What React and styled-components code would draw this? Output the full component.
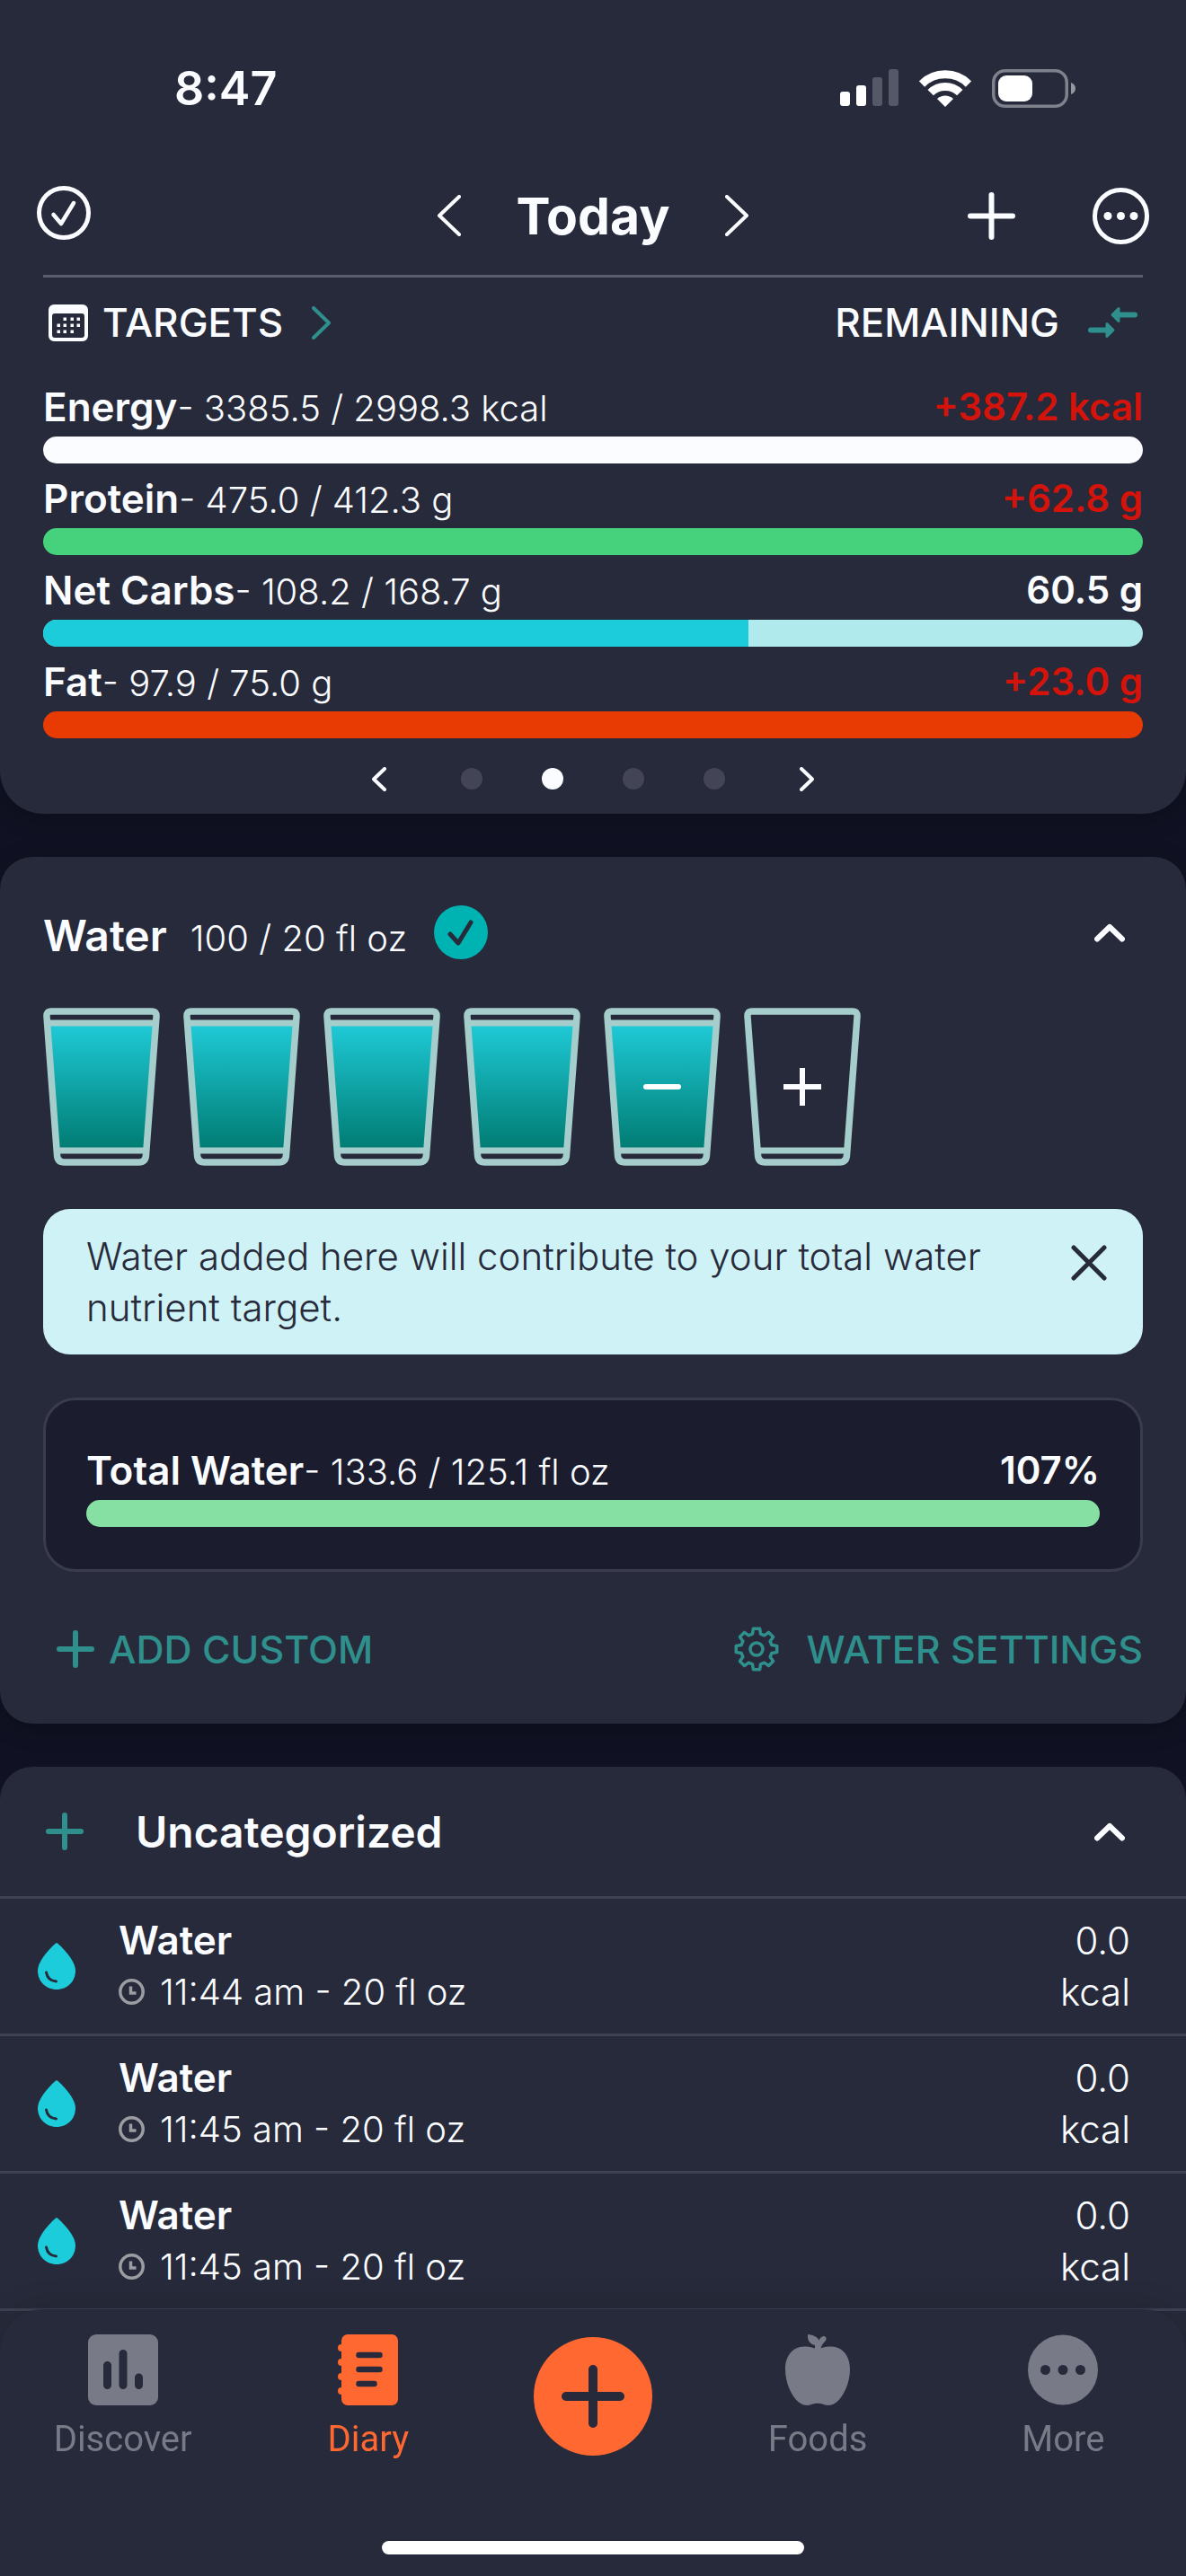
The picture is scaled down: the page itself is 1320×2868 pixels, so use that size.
import React, { useState } from 'react'
import styled, { createGlobalStyle } from 'styled-components'

const targets = [
  { name: 'Energy', amount: '3385.5 / 2998.3 kcal', remaining: '+387.2 kcal', over: true, percent: 100, color: '#fafcff' },
  { name: 'Protein', amount: '475.0 / 412.3 g', remaining: '+62.8 g', over: true, percent: 100, color: '#46d27c' },
  { name: 'Net Carbs', amount: '108.2 / 168.7 g', remaining: '60.5 g', over: false, percent: 64.1, color: '#1dccdb' },
  { name: 'Fat', amount: '97.9 / 75.0 g', remaining: '+23.0 g', over: true, percent: 100, color: '#e83b04' },
]

const entries = [
  { id: 1, name: 'Water', time: '11:44 am', amount: '20 fl oz', energy: '0.0' },
  { id: 2, name: 'Water', time: '11:45 am', amount: '20 fl oz', energy: '0.0' },
  { id: 3, name: 'Water', time: '11:45 am', amount: '20 fl oz', energy: '0.0' },
]

const glasses = ['full', 'full', 'full', 'full', 'minus', 'plus']

export default function App() {
  const [page, setPage] = useState(1)
  const [notice, setNotice] = useState(true)

  return (
    <React.Fragment>
      <GlobalStyle />

      <TopCard>
        <StatusBar>
          <Clock>8:47</Clock>
          <StatusIcons>
            <SignalIcon />
            <WifiIcon />
            <BatteryIcon />
          </StatusIcons>
        </StatusBar>

        <Header>
          <HeaderSide>
            <IconButton aria-label="Mark day complete">
              <CheckCircleIcon />
            </IconButton>
          </HeaderSide>
          <HeaderTitle>
            <IconButton aria-label="Previous day">
              <ChevronIcon width={26} height={46} direction="left" />
            </IconButton>
            <Title>Today</Title>
            <IconButton aria-label="Next day">
              <ChevronIcon width={26} height={46} direction="right" />
            </IconButton>
          </HeaderTitle>
          <HeaderSide end>
            <IconButton aria-label="Add">
              <PlusIcon size={53} />
            </IconButton>
            <IconButton aria-label="Options">
              <OptionsIcon />
            </IconButton>
          </HeaderSide>
        </Header>

        <Targets>
          <TargetsHead>
            <HeadButton>
              <CalendarIcon />
              TARGETS
              <Teal>
                <ChevronIcon width={21} height={37} direction="right" />
              </Teal>
            </HeadButton>
            <HeadButton>
              REMAINING
              <Teal>
                <SwapIcon />
              </Teal>
            </HeadButton>
          </TargetsHead>

          {targets.map(target => (
            <Target key={target.name}>
              <BarLine>
                <div>
                  <Strong>{target.name}</Strong>
                  <Light>- {target.amount}</Light>
                </div>
                <Value over={target.over}>{target.remaining}</Value>
              </BarLine>
              <Bar role="progressbar" aria-label={target.name} aria-valuenow={target.percent}>
                <BarFill color={target.color} style={{ width: `${target.percent}%` }} />
              </Bar>
            </Target>
          ))}

          <Pager>
            <IconButton aria-label="Previous targets" onClick={() => setPage(Math.max(page - 1, 0))}>
              <ChevronIcon width={16} height={27} direction="left" />
            </IconButton>
            <Dots>
              {[0, 1, 2, 3].map(dot => (
                <Dot key={dot} active={dot === page} aria-label={`Page ${dot + 1}`} onClick={() => setPage(dot)} />
              ))}
            </Dots>
            <IconButton aria-label="Next targets" onClick={() => setPage(Math.min(page + 1, 3))}>
              <ChevronIcon width={16} height={27} direction="right" />
            </IconButton>
          </Pager>
        </Targets>
      </TopCard>

      <WaterCard>
        <WaterHead>
          <WaterTitle>
            <SectionTitle>Water</SectionTitle>
            <Light>100 / 20 fl oz</Light>
          </WaterTitle>
          <DoneIcon />
          <Collapse aria-label="Collapse water">
            <CaretIcon />
          </Collapse>
        </WaterHead>

        <Glasses>
          {glasses.map((kind, index) => (
            <IconButton key={index} aria-label={kind === 'plus' ? 'Add glass' : 'Remove glass'}>
              <GlassIcon kind={kind} />
            </IconButton>
          ))}
        </Glasses>

        {notice && (
          <Notice>
            <NoticeText>Water added here will contribute to your total water nutrient target.</NoticeText>
            <NoticeClose aria-label="Dismiss" onClick={() => setNotice(false)}>
              <CloseIcon />
            </NoticeClose>
          </Notice>
        )}

        <Total>
          <BarLine>
            <div>
              <Strong>Total Water</Strong>
              <Light>- 133.6 / 125.1 fl oz</Light>
            </div>
            <Value>107%</Value>
          </BarLine>
          <Bar role="progressbar" aria-label="Total Water" aria-valuenow={100}>
            <BarFill color="#86e0a3" style={{ width: '100%' }} />
          </Bar>
        </Total>

        <Actions>
          <Action>
            <PlusIcon size={42} />
            ADD CUSTOM
          </Action>
          <Action wide>
            <GearIcon />
            WATER SETTINGS
          </Action>
        </Actions>
      </WaterCard>

      <MealCard>
        <MealHead>
          <MealAdd aria-label="Add to Uncategorized">
            <PlusIcon size={42} />
          </MealAdd>
          <SectionTitle>Uncategorized</SectionTitle>
          <Collapse aria-label="Collapse Uncategorized">
            <CaretIcon />
          </Collapse>
        </MealHead>

        <EntryList>
          {entries.map(entry => (
            <Entry key={entry.id}>
              <DropIcon />
              <EntryBody>
                <Strong>{entry.name}</Strong>
                <EntryInfo>
                  <ClockIcon />
                  {entry.time} - {entry.amount}
                </EntryInfo>
              </EntryBody>
              <EntryEnergy>
                <span>{entry.energy}</span>
                <span>kcal</span>
              </EntryEnergy>
            </Entry>
          ))}
        </EntryList>
      </MealCard>

      <TabBar>
        <Tabs>
          <Tab href="#discover">
            <DiscoverIcon />
            Discover
          </Tab>
          <Tab href="#diary" active>
            <DiaryIcon />
            Diary
          </Tab>
          <AddSlot>
            <AddButton aria-label="Add entry">
              <PlusIcon size={70} stroke={10} />
            </AddButton>
          </AddSlot>
          <Tab href="#foods">
            <AppleIcon />
            Foods
          </Tab>
          <Tab href="#more">
            <MoreIcon />
            More
          </Tab>
        </Tabs>
        <HomeIndicator />
      </TabBar>
    </React.Fragment>
  )
}

function SignalIcon() {
  return (
    <svg width="65" height="42" viewBox="0 0 65 42" fill="#fff">
      <rect x="0" y="25" width="11" height="16" rx="3" />
      <rect x="18" y="18" width="11" height="23" rx="3" />
      <rect x="36" y="9" width="11" height="32" rx="3" fill="#555866" />
      <rect x="54" y="0" width="11" height="41" rx="3" fill="#555866" />
    </svg>
  )
}

function WifiIcon() {
  return (
    <svg width="58" height="43" viewBox="0 0 58 43" fill="none" stroke="#fff" strokeWidth="9">
      <path d="M3 16.5a37 37 0 0 1 52 0" />
      <path d="M12.7 26.2a23 23 0 0 1 32.6 0" />
      <path d="M29 42l-9-9a13 13 0 0 1 18 0z" fill="#fff" stroke="none" />
    </svg>
  )
}

function BatteryIcon() {
  return (
    <svg width="94" height="43" viewBox="0 0 94 43">
      <rect x="1.75" y="1.75" width="81.5" height="39.5" rx="13" fill="none" stroke="#7f818d" strokeWidth="3.5" />
      <rect x="7" y="7" width="38" height="29" rx="9" fill="#fff" />
      <path d="M88 15c3 1 5 3.500 5 6.500s-2 5.500-5 6.500z" fill="#9496a0" />
    </svg>
  )
}

function CheckCircleIcon() {
  return (
    <svg width="60" height="66" viewBox="0 0 60 66" fill="none" stroke="currentColor" strokeLinecap="round" strokeLinejoin="round">
      <circle cx="30" cy="30" r="27.500" strokeWidth="5" />
      <path d="M18.500 32l8.500 10 14-23" strokeWidth="4.500" />
    </svg>
  )
}

function OptionsIcon() {
  return (
    <svg width="63" height="63" viewBox="0 0 63 63" fill="currentColor">
      <circle cx="31.500" cy="31.500" r="29" fill="none" stroke="currentColor" strokeWidth="5" />
      <circle cx="17" cy="31.500" r="4.500" />
      <circle cx="31.500" cy="31.500" r="4.500" />
      <circle cx="46" cy="31.500" r="4.500" />
    </svg>
  )
}

function ChevronIcon({ width, height, direction }) {
  const near = direction === 'left' ? width - 2 : 2
  const far = direction === 'left' ? 2 : width - 2

  return (
    <svg width={width} height={height} fill="none" stroke="currentColor" strokeWidth="4" strokeLinecap="round" strokeLinejoin="round">
      <path d={`M${near} 2L${far} ${height / 2}L${near} ${height - 2}`} />
    </svg>
  )
}

function PlusIcon({ size, stroke = 6 }) {
  const mid = size / 2
  const edge = stroke / 2

  return (
    <svg width={size} height={size} fill="none" stroke="currentColor" strokeWidth={stroke} strokeLinecap="round">
      <path d={`M${edge} ${mid}H${size - edge}M${mid} ${edge}V${size - edge}`} />
    </svg>
  )
}

function CalendarIcon() {
  const dots = [[18, 16], [26, 16], [33, 16], [11, 23], [18, 23], [26, 23], [33, 23], [11, 30], [18, 30], [26, 30]]

  return (
    <svg width="44" height="41" viewBox="0 0 44 41" fill="currentColor">
      <path fillRule="evenodd" d="M6 0h32a6 6 0 0 1 6 6v29a6 6 0 0 1-6 6H6a6 6 0 0 1-6-6V6a6 6 0 0 1 6-6zM7 10a3 3 0 0 0-3 3v21a3 3 0 0 0 3 3h30a3 3 0 0 0 3-3V13a3 3 0 0 0-3-3z" />
      {dots.map(([x, y]) => (
        <rect key={`${x}-${y}`} x={x - 1.5} y={y - 1.5} width="3.500" height="3.500" />
      ))}
    </svg>
  )
}

function SwapIcon() {
  return (
    <svg width="55" height="36" viewBox="0 0 55 36" stroke="currentColor" strokeLinecap="round" strokeLinejoin="round">
      <path d="M52 9.500H36M3 26.500h16" strokeWidth="6" fill="none" />
      <path d="M27 9.500l7-7v14zM28 26.500l-7-7v14z" strokeWidth="3" fill="currentColor" />
    </svg>
  )
}

function DoneIcon() {
  return (
    <svg width="60" height="60" viewBox="0 0 60 60">
      <circle cx="30" cy="30" r="30" fill="#00b3b3" />
      <path d="M18 32l9 10 14-23" fill="none" stroke="#272a3a" strokeWidth="5" strokeLinecap="round" strokeLinejoin="round" />
    </svg>
  )
}

function CaretIcon() {
  return (
    <svg width="34" height="21" viewBox="0 0 34 21" fill="none" stroke="currentColor" strokeWidth="6" strokeLinecap="round" strokeLinejoin="round">
      <path d="M3 17.500L17 4l14 13.500" />
    </svg>
  )
}

function GlassIcon({ kind }) {
  return (
    <svg width="130" height="176" viewBox="0 0 130 176" fill="none">
      <defs>
        <linearGradient id="water" x1="0" y1="0" x2="0" y2="1">
          <stop offset="0" stopColor="#1fcbd8" />
          <stop offset="1" stopColor="#007b72" />
        </linearGradient>
      </defs>
      {kind !== 'plus' && (
        <React.Fragment>
          <path d="M5 17h120L112 158H18z" fill="url(#water)" />
          <path d="M5 17h120" stroke="#a4cdcc" strokeWidth="7" />
        </React.Fragment>
      )}
      <path d="M16 159h98" stroke="#a4cdcc" strokeWidth="7" />
      <path
        d="M9 4h112q5.500 0 5 6L114.500 164q-.5 8-8 8h-83q-7.500 0-8-8L4 10Q3.500 4 9 4z"
        stroke="#a4cdcc"
        strokeWidth="7.500"
        strokeLinejoin="round"
      />
      {kind === 'minus' && <path d="M47 88h36" stroke="#fff" strokeWidth="6" strokeLinecap="round" />}
      {kind === 'plus' && <path d="M44 88h42M65 67v42" stroke="#fafcff" strokeWidth="6" />}
    </svg>
  )
}

function CloseIcon() {
  return (
    <svg width="40" height="40" viewBox="0 0 40 40" stroke="currentColor" strokeWidth="5" strokeLinecap="round">
      <path d="M3 3l34 34M37 3L3 37" />
    </svg>
  )
}

// Eight teeth around a ring, one corner pair per tooth
function GearIcon() {
  const points = []
  for (let tooth = 0; tooth < 8; tooth++) {
    const corners = [[-15, 17.5], [-9, 23], [9, 23], [15, 17.5]]
    corners.forEach(([offset, radius]) => {
      const angle = ((tooth * 45 + offset) * Math.PI) / 180
      points.push(`${(25 + radius * Math.sin(angle)).toFixed(2)},${(25 - radius * Math.cos(angle)).toFixed(2)}`)
    })
  }

  return (
    <svg width="50" height="50" viewBox="0 0 50 50" fill="none" stroke="currentColor" strokeWidth="3.500" strokeLinejoin="round">
      <polygon points={points.join(' ')} />
      <circle cx="25" cy="25" r="7" />
    </svg>
  )
}

function DropIcon() {
  return (
    <svg width="42" height="52" viewBox="0 0 42 52">
      <path d="M21 0c1 0 21 18 21 31 0 12-9 21-21 21S0 43 0 31C0 18 20 0 21 0z" fill="#1dccdb" />
      <path d="M9.500 33c1 6 5 9.500 11 10" fill="none" stroke="#272a3a" strokeWidth="3" strokeLinecap="round" />
    </svg>
  )
}

function ClockIcon() {
  return (
    <svg width="29" height="29" viewBox="0 0 29 29" fill="none" stroke="#9c9da3">
      <circle cx="14.500" cy="14.500" r="12.700" strokeWidth="3.500" />
      <path d="M13.500 8.500v7.500h6" strokeWidth="3.500" />
    </svg>
  )
}

function DiscoverIcon() {
  return (
    <svg width="78" height="79" viewBox="0 0 78 79">
      <rect width="78" height="79" rx="9" fill="currentColor" />
      <path d="M21.500 34.500v22M39 21.500v35M56.500 48v8.500" stroke="#272a3a" strokeWidth="9" strokeLinecap="round" />
    </svg>
  )
}

function DiaryIcon() {
  return (
    <svg width="67" height="79" viewBox="0 0 67 79" fill="currentColor">
      <rect x="4" width="63" height="79" rx="7" />
      {[15, 31, 47, 63].map(y => (
        <circle key={y} cx="4" cy={y} r="4" />
      ))}
      <path d="M23.500 23h23M23.500 39h23M23.500 55h17" stroke="#272a3a" strokeWidth="6.500" strokeLinecap="round" />
    </svg>
  )
}

function AppleIcon() {
  return (
    <svg width="72" height="79" viewBox="0 0 72 79" fill="currentColor">
      <path d="M36 16.500c-5-2-10-3.500-15-3C8 14 0 24 0 39c0 15 7 30 15 36.500 5 4 10 4 14 2.500 5-1.700 9-1.700 14 0 4 1.500 9 1.500 14-2.500C65 69 72 54 72 39c0-15-8-25-21-25.500-5-.5-10 1-15 3z" />
      <path d="M25 0c6 .5 11 3 12.500 6.500C39 4 40 2.500 42 2.200c3-.6 4.500 2.300 3 4.800-3 3-5 5-5.500 10H33v-5c-6-1-8.500-6-8-12z" />
    </svg>
  )
}

function MoreIcon() {
  return (
    <svg width="78" height="79" viewBox="0 0 78 79">
      <circle cx="39" cy="39.500" r="39" fill="currentColor" />
      <g fill="#272a3a">
        <circle cx="19.500" cy="39.500" r="5.500" />
        <circle cx="39" cy="39.500" r="5.500" />
        <circle cx="58.500" cy="39.500" r="5.500" />
      </g>
    </svg>
  )
}

const GlobalStyle = createGlobalStyle`
  * {
    box-sizing: border-box;
  }

  body {
    margin: 0;
    background: #101223;
    color: #fafcff;
    font-family: Inter, 'Liberation Sans', sans-serif;
    font-size: 42px;
    line-height: 57px;
  }

  button {
    border: 0;
    padding: 0;
    background: none;
    color: inherit;
    font: inherit;
    cursor: pointer;
  }

  svg {
    display: block;
    flex: none;
  }
`

const TopCard = styled.header`
  background: #272a3a;
  border-radius: 0 0 48px 48px;
  box-shadow: 0 6px 24px rgba(0, 0, 0, 0.25);
`

const StatusBar = styled.div`
  display: flex;
  align-items: center;
  justify-content: space-between;
  height: 174px;
  padding: 66px 122px 44px 194px;
`

const Clock = styled.div`
  font-size: 52px;
  font-weight: 600;
`

const StatusIcons = styled.div`
  display: flex;
  align-items: center;
  gap: 23px;
`

const Header = styled.div`
  display: grid;
  grid-template-columns: 1fr auto 1fr;
  align-items: center;
  height: 132px;
  padding: 0 41px;
`

const HeaderSide = styled.div`
  display: flex;
  align-items: center;
  justify-content: ${props => (props.end ? 'flex-end' : 'flex-start')};
  gap: 86px;
`

const HeaderTitle = styled.div`
  display: flex;
  align-items: center;
  gap: 62px;
`

const Title = styled.h1`
  margin: 0;
  font-size: 57px;
  font-weight: 700;
`

const IconButton = styled.button`
  display: flex;
`

const Targets = styled.section`
  margin: 0 48px;
  border-top: 3px solid #5b5e6d;
`

const TargetsHead = styled.div`
  display: flex;
  justify-content: space-between;
  height: 111px;
  padding-bottom: 11px;
`

const HeadButton = styled.button`
  display: flex;
  align-items: center;
  gap: 16px;
  padding: 0 6px;
  font-size: 44px;
  font-weight: 500;
`

const Teal = styled.span`
  margin-left: 16px;
  color: #2f8f8c;
`

const Target = styled.div`
  margin-bottom: 6px;
`

const BarLine = styled.div`
  display: flex;
  justify-content: space-between;
  height: 66px;
  line-height: 66px;
`

const Strong = styled.span`
  font-size: 44px;
  font-weight: 600;
`

const Value = styled.span`
  font-weight: 600;
  color: ${props => (props.over ? '#d4130b' : '#fafcff')};
`

const Light = styled.span`
  font-size: 40px;
  font-weight: 300;
`

const Bar = styled.div`
  height: 30px;
  border-radius: 15px;
  overflow: hidden;
  background: #b1eaed;
`

const BarFill = styled.div`
  height: 100%;
  background: ${props => props.color};
`

const Pager = styled.div`
  display: flex;
  align-items: center;
  justify-content: center;
  gap: 83px;
  height: 78px;
`

const Dots = styled.div`
  display: flex;
  gap: 66px;
`

const Dot = styled.button`
  width: 24px;
  height: 24px;
  border-radius: 50%;
  background: ${props => (props.active ? '#fafcff' : '#434556')};
`

const WaterCard = styled.section`
  margin: 48px 0;
  padding: 36px 48px 45px;
  background: #272a3a;
  border-radius: 36px;
  box-shadow: 0 6px 24px rgba(0, 0, 0, 0.25);
`

const WaterHead = styled.div`
  display: flex;
  align-items: center;
  gap: 30px;
  height: 96px;
`

const WaterTitle = styled.div`
  display: flex;
  align-items: baseline;
  gap: 26px;
  padding-top: 10px;
`

const SectionTitle = styled.h2`
  margin: 0;
  font-size: 48px;
  font-weight: 600;
`

const Collapse = styled.button`
  margin-left: auto;
  padding: 20px;
`

const Glasses = styled.div`
  display: flex;
  gap: 26px;
  margin-top: 36px;
`

const Notice = styled.div`
  display: flex;
  align-items: flex-start;
  justify-content: space-between;
  margin-top: 48px;
  padding: 24px 40px 24px 48px;
  border-radius: 30px;
  background: #cef2f5;
  color: #272a3a;
`

const NoticeText = styled.p`
  margin: 0;
  max-width: 1020px;
  font-weight: 300;
`

const NoticeClose = styled.button`
  padding: 16px 0;
`

const Total = styled.div`
  margin-top: 48px;
  padding: 45px 45px 47px;
  border: 3px solid #3a3c4d;
  border-radius: 36px;
  background: #1b1d2e;
`

const Actions = styled.div`
  display: flex;
  justify-content: space-between;
  margin-top: 48px;
`

const Action = styled.button`
  display: flex;
  align-items: center;
  gap: ${props => (props.wide ? '30px' : '16px')};
  height: 76px;
  padding-left: 15px;
  font-size: 43px;
  font-weight: 500;
  color: #2f8f8c;
`

const MealCard = styled.section`
  padding-bottom: 295px;
  background: #272a3a;
  border-radius: 36px 36px 0 0;
`

const MealHead = styled.div`
  display: flex;
  align-items: center;
  height: 147px;
  padding: 0 48px 0 51px;
  border-bottom: 3px solid #3f4153;
`

const MealAdd = styled.button`
  margin-right: 58px;
  color: #2f8f8c;
`

const EntryList = styled.ul`
  margin: 0;
  padding: 0;
  list-style: none;
`

const Entry = styled.li`
  display: flex;
  align-items: center;
  padding: 18px 62px 18px 42px;
  border-bottom: 3px solid #3f4153;
`

const EntryBody = styled.div`
  display: flex;
  flex-direction: column;
  flex: 1;
  margin-left: 48px;
`

const EntryInfo = styled.span`
  display: flex;
  align-items: center;
  gap: 17px;
  font-size: 40px;
  font-weight: 300;
`

const EntryEnergy = styled.div`
  display: flex;
  flex-direction: column;
  align-items: flex-end;
  font-weight: 300;
`

const TabBar = styled.nav`
  position: fixed;
  right: 0;
  bottom: 0;
  left: 0;
  padding: 28px 0 24px;
  border-radius: 48px 48px 0 0;
  background: #272a3a;
  box-shadow: 0 -6px 30px rgba(0, 0, 0, 0.12);
`

const Tabs = styled.div`
  display: flex;
  height: 230px;
`

const Tab = styled.a`
  display: flex;
  flex-direction: column;
  align-items: center;
  flex: 1;
  gap: 14px;
  font-family: Roboto, sans-serif;
  font-size: 40px;
  line-height: 48px;
  text-decoration: none;
  color: ${props => (props.active ? '#ff6831' : '#787a88')};
`

const AddSlot = styled.div`
  width: 227px;
  padding-top: 3px;
`

const AddButton = styled.button`
  display: flex;
  align-items: center;
  justify-content: center;
  width: 132px;
  height: 132px;
  margin: 0 auto;
  border-radius: 50%;
  background: #ff6831;
  color: #272a3a;
`

const HomeIndicator = styled.div`
  width: 470px;
  height: 15px;
  margin: 0 auto;
  border-radius: 8px;
  background: #fff;
`
